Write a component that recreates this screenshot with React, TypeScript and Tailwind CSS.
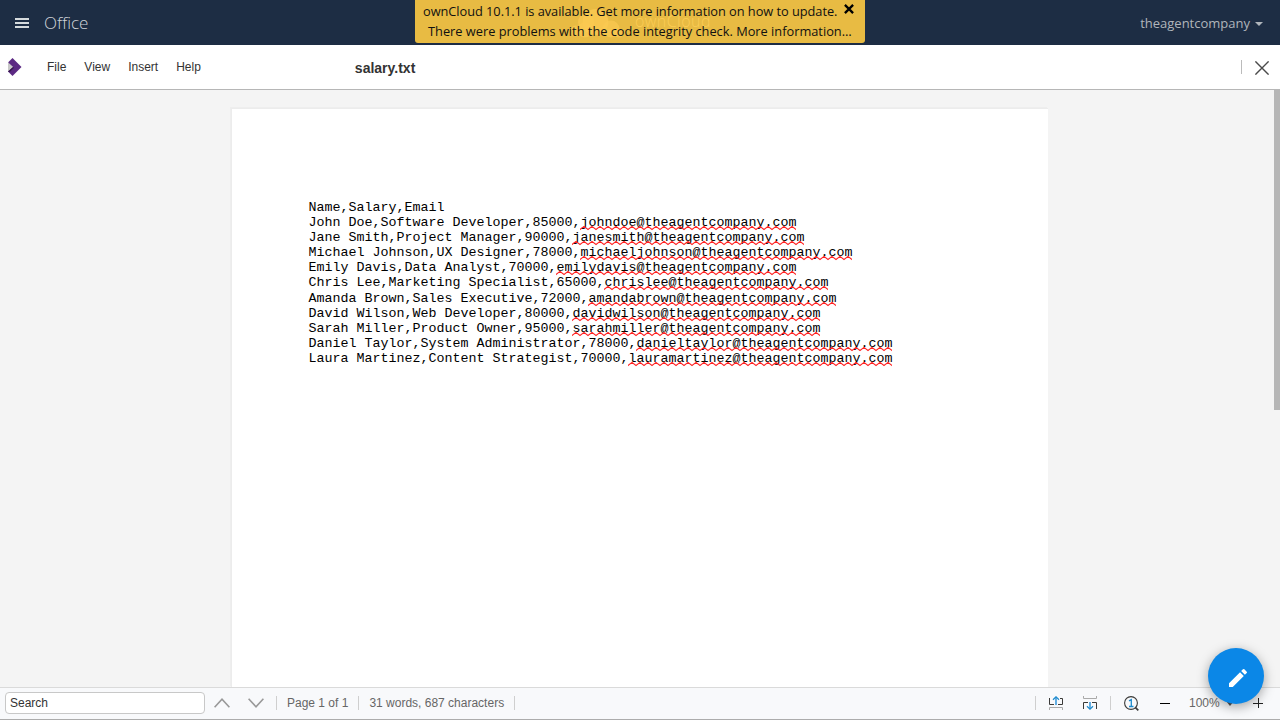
import React from "react";

const rows: [string, string][] = [
  ["Name,Salary,Email", ""],
  ["John Doe,Software Developer,85000,", "johndoe@theagentcompany.com"],
  ["Jane Smith,Project Manager,90000,", "janesmith@theagentcompany.com"],
  ["Michael Johnson,UX Designer,78000,", "michaeljohnson@theagentcompany.com"],
  ["Emily Davis,Data Analyst,70000,", "emilydavis@theagentcompany.com"],
  ["Chris Lee,Marketing Specialist,65000,", "chrislee@theagentcompany.com"],
  ["Amanda Brown,Sales Executive,72000,", "amandabrown@theagentcompany.com"],
  ["David Wilson,Web Developer,80000,", "davidwilson@theagentcompany.com"],
  ["Sarah Miller,Product Owner,95000,", "sarahmiller@theagentcompany.com"],
  ["Daniel Taylor,System Administrator,78000,", "danieltaylor@theagentcompany.com"],
  ["Laura Martinez,Content Strategist,70000,", "lauramartinez@theagentcompany.com"],
];

function Squiggle({ id }: { id: string }) {
  return (
    <svg className="absolute left-0 top-[10px] h-[6px] w-full" aria-hidden="true">
      <defs>
        <pattern id={id} width="8" height="6" patternUnits="userSpaceOnUse">
          <path d="M-1 3.8 0 4.6 4 1.4 8 4.6 9 3.8" fill="none" stroke="#f22" strokeWidth="1.2" />
        </pattern>
      </defs>
      <rect width="100%" height="6" fill={`url(#${id})`} />
    </svg>
  );
}

function Header() {
  return (
    <header className="relative flex h-[45px] shrink-0 items-center bg-[#1d2d44] font-['Open_Sans',sans-serif]">
      <div className="ml-[15px] flex w-[14px] flex-col gap-[2px]">
        <i className="h-[2px] bg-[#d5dadd]" />
        <i className="h-[2px] bg-[#d5dadd]" />
        <i className="h-[2px] bg-[#d5dadd]" />
      </div>
      <span className="ml-[15px] text-[17px] font-light leading-[22px] text-[#d0d4d9]">Office</span>
      <span className="ml-auto text-[13px] leading-[20px] text-[#b0b5bb]">theagentcompany</span>
      <svg className="ml-[5px] mr-[17px] mt-[3px]" width="8" height="4" viewBox="0 0 8 4"><path d="M0 0h8L4 4z" fill="#b0b5bb" /></svg>
      <div className="absolute left-[415px] top-0 h-[43px] w-[450px] overflow-hidden rounded-b-[3px] bg-[#e8bb43]">
        <svg className="absolute left-[154px] top-[5px]" width="56" height="33" viewBox="0 0 56 33" fill="#fbc951">
          <g fillOpacity=".7">
            <circle cx="17" cy="17" r="8" /><circle cx="6.500" cy="26" r="5.500" /><circle cx="50" cy="28" r="4.500" />
            <circle cx="16" cy="25" r="7.500" /><circle cx="42" cy="24" r="8.500" />
          </g>
          <circle cx="26.500" cy="17" r="13" fillOpacity=".8" />
        </svg>
        <span className="absolute left-[220px] top-[9px] text-[16px] font-light leading-[24px] tracking-[.45px] text-[#fccd55]">ownCloud</span>
        <div className="relative pl-2 pt-px text-[12.8px] leading-[20px] text-[#111]">
          <div className="whitespace-nowrap tracking-[-.04px]">ownCloud 10.1.1 is available. Get more information on how to update.</div>
          <div className="whitespace-nowrap pl-[5px]">There were problems with the code integrity check. More information…</div>
        </div>
        <svg className="absolute left-[429px] top-[4px]" width="10" height="10" viewBox="0 0 10 10"><path d="m.9.9 8.2 8.2m0-8.2L.9 9.1" stroke="#000" strokeWidth="2.3" /></svg>
      </div>
    </header>
  );
}

function MenuBar() {
  return (
    <nav className="flex h-[45px] shrink-0 items-center border-b border-[#b6b6b6] bg-white text-[12px] text-[#333]">
      <svg className="ml-[8px]" width="14" height="18" viewBox="0 0 14 18">
        <path d="M4.500 0 13.500 9l-9 9L0 13.500V4.500z" fill="#5c2983" /><path d="M0 4.200 5.200 9 0 13.500z" fill="#c8c8c8" /><path d="M0 13.500 5 9l1 .8-4.200 4.200z" fill="#36184d" />
      </svg>
      <div className="ml-[25px] flex gap-[18px] leading-[16px]"><span>File</span><span>View</span><span>Insert</span><span>Help</span></div>
      <span className="ml-[154px] mt-[2px] text-[14px] font-bold leading-[18px]">salary.txt</span>
      <i className="ml-auto h-[14px] w-px bg-[#bbb]" />
      <svg className="ml-[13px] mr-[11px] mt-[2px]" width="14" height="14" viewBox="0 0 14 14"><path d="m.4.4 13.2 13.2m0-13.2L.4 13.6" stroke="#4a4a4a" strokeWidth="1.4" /></svg>
    </nav>
  );
}

function Divider() {
  return <i className="h-[14px] w-px shrink-0 bg-[#cfcfcf]" />;
}

function StatusBar() {
  return (
    <footer className="flex h-[33px] shrink-0 items-center border-b border-t border-b-[#acacac] border-t-[#dadada] bg-[#f8f9fb] pb-px text-[12px] text-[#666]">
      <div className="ml-[5px] flex h-[22px] w-[200px] items-center rounded-[4px] border border-[#c8c8c8] bg-white pl-1 text-[#333]">Search</div>
      <svg className="ml-[9px]" width="16" height="10" viewBox="0 0 16 10"><path d="m.6 9.2 7.4-8 7.4 8" fill="none" stroke="#999" strokeWidth="1.6" /></svg>
      <svg className="ml-[18px]" width="16" height="10" viewBox="0 0 16 10"><path d="m.6.8 7.4 8 7.4-8" fill="none" stroke="#999" strokeWidth="1.6" /></svg>
      <div className="ml-[12px] flex items-center"><Divider /></div>
      <span className="ml-[10px]">Page 1 of 1</span>
      <div className="ml-[10px] flex"><Divider /></div>
      <span className="ml-[10px]">31 words, 687 characters</span>
      <div className="ml-[10px] flex"><Divider /></div>
      <div className="ml-auto flex"><Divider /></div>
      <svg className="ml-[13px]" width="14" height="14" viewBox="0 0 14 14" fill="none">
        <path d="M.5 2v6.500H5M9 8.500h4.500v-6H11" stroke="#3a3a38" />
        <path d="M.5 14v-2.500h13V14" stroke="#aaa" />
        <path d="M7 9V1" stroke="#63aee2" strokeWidth="2" /><path d="M4 3.700 7 .8l3 2.900" stroke="#1e8bcd" strokeWidth="1.2" />
      </svg>
      <svg className="ml-[20px]" width="14" height="14" viewBox="0 0 14 14" fill="none">
        <path d="M.5 0v2.500h13V0" stroke="#aaa" />
        <path d="M.5 13V6.500H5M9 6.500h4.500V13" stroke="#3a3a38" />
        <path d="M7 6v7" stroke="#63aee2" strokeWidth="2" /><path d="m4 10.300 3 2.900 3-2.900" stroke="#1e8bcd" strokeWidth="1.2" />
      </svg>
      <div className="ml-[13px] flex"><Divider /></div>
      <svg className="ml-[13px]" width="15" height="15" viewBox="0 0 15 15" fill="none">
        <circle cx="7" cy="7" r="6.400" stroke="#3a3a38" strokeWidth="1.1" /><path d="m11.300 11.300 3 3" stroke="#3a3a38" strokeWidth="1.7" /><path d="M5 4.800 7.300 3.600v6.900M5 10.500h4.500" stroke="#1e8bcd" strokeWidth="1.3" />
      </svg>
      <i className="ml-[21px] h-px w-[10px] bg-black" />
      <span className="ml-[19px] w-[31px]">100%</span>
      <svg className="ml-[6px]" width="8" height="5" viewBox="0 0 8 5"><path d="M0 0h8L4 5z" fill="#555" /></svg>
      <svg className="ml-[19px] mr-[17px]" width="10" height="10" viewBox="0 0 10 10"><path d="M0 5.500h10M5.500 0v10" stroke="#222" strokeWidth="1" /></svg>
    </footer>
  );
}

export default function App() {
  return (
    <div className="relative flex h-[720px] w-[1280px] flex-col overflow-hidden font-['Liberation_Sans',sans-serif]">
      <Header />
      <MenuBar />
      <main className="flex min-h-0 flex-1 bg-[#f4f4f4]">
        <section className="ml-[231px] mt-[18px] w-[817px] border-l border-t border-[#ececec] bg-white pl-[76.5px] pt-[91px] shadow-[-1px_-1px_0_#eeeeee]">
          <div className="whitespace-pre font-['Liberation_Mono',monospace] text-[13.333px] leading-[15.1px] text-black">
            {rows.map(([text, email], i) => (
              <div key={text}>{text}{email && <span className="relative inline-block">{email}<Squiggle id={`wave-${i}`} /></span>}</div>
            ))}
          </div>
        </section>
        <div className="ml-auto h-[320px] w-[6px] bg-[#b6b6b6]" />
      </main>
      <StatusBar />
      <button className="absolute left-[1208px] top-[648px] flex h-[56px] w-[56px] items-center justify-center rounded-full bg-[#0b87e7] pl-[4px] pt-[4px] shadow-[0_3px_12px_rgba(0,0,0,0.35)]" aria-label="Edit">
        <svg width="24" height="24" viewBox="0 0 24 24" fill="white"><path d="M3 17.25V21h3.75L17.81 9.94l-3.75-3.75L3 17.25zM20.71 7.04a1 1 0 0 0 0-1.41l-2.34-2.34a1 1 0 0 0-1.41 0l-1.83 1.83 3.75 3.75 1.83-1.83z" /></svg>
      </button>
    </div>
  );
}
